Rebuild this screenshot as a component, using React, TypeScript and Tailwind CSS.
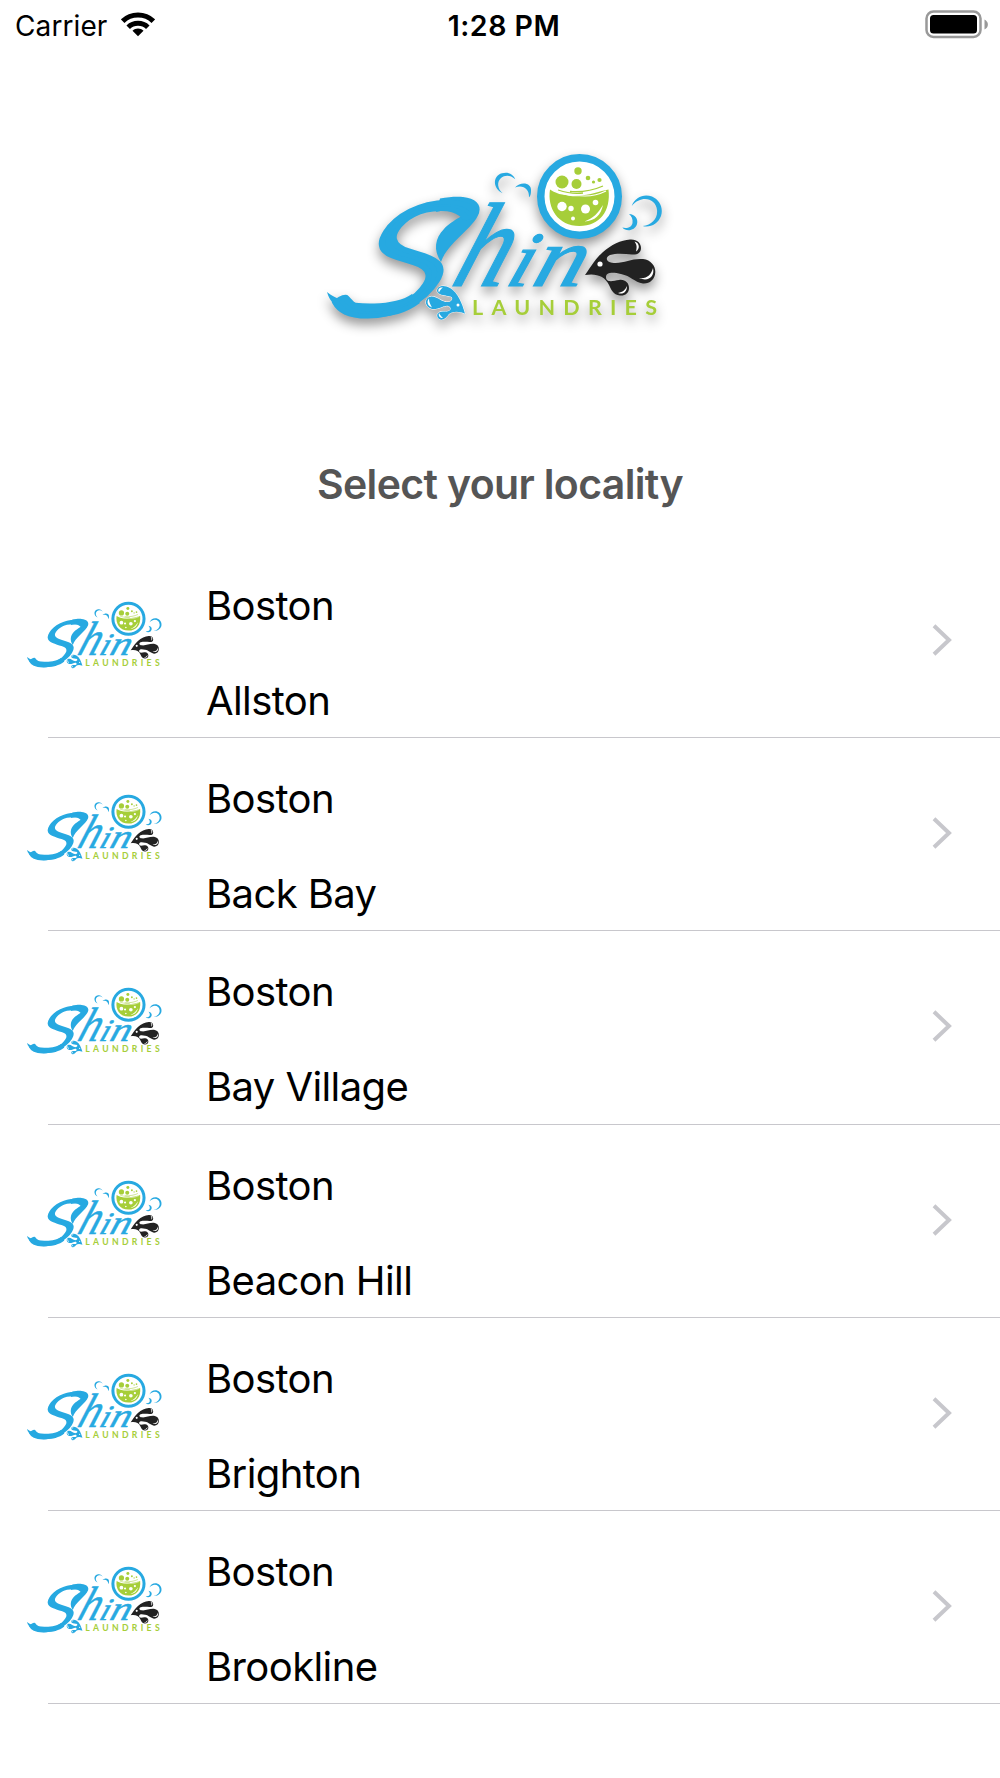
const LOCALITIES = [
  { city: 'Boston', area: 'Allston' },
  { city: 'Boston', area: 'Back Bay' },
  { city: 'Boston', area: 'Bay Village' },
  { city: 'Boston', area: 'Beacon Hill' },
  { city: 'Boston', area: 'Brighton' },
  { city: 'Boston', area: 'Brookline' },
];

function Logo({ className }: { className: string }) {
  return (
    <svg viewBox="320 140 350 200" className={`overflow-visible ${className}`} role="img" aria-label="Shine Laundries">
      {/* Flourishes and lettering */}
      <g fill="#27a9e1">
        <path d="M327 292 C337 300 350 304 374 303.500 C390 303 404 300 412 294 L420 303 C406 314 388 317.500 372 317 C360 317.500 350 314 343 310 C334 305 329 300 327 292Z" />
        <path d="M440 198.500 C450 196.500 458 196.500 463 197 C475 198.500 482 204 479 213 C474 228 447 243 441 262 C433 250 435 238 444 229 C452 220 468 214 468 210 C466 206 458 208 436 212Z" />
      </g>
      <g fill="#27a9e1" stroke="#27a9e1">
        <text
          transform="translate(318 315) skewX(-32) scale(1.29 1)"
          fontSize="158"
          strokeWidth="4.500"
          className="font-['Lato'] font-light"
        >
          S
        </text>
        <g className="font-['Liberation_Serif'] italic" strokeWidth="1.200">
          <text transform="translate(449 286) skewX(-20) scale(0.88 1)" fontSize="120">
            h
          </text>
          <text transform="translate(504 286) skewX(-20) scale(1.1 1)" fontSize="78">
            i
          </text>
          <text transform="translate(530 286) skewX(-18) scale(1.2 1)" fontSize="84">
            n
          </text>
        </g>
      </g>
      <text
        x="472"
        y="315"
        fill="#a6ce39"
        fontSize="21.500"
        textLength="185"
        className="font-['Lato'] font-bold"
      >
        LAUNDRIES
      </text>

      {/* Washer door */}
      <circle cx="579.5" cy="196.500" r="38.750" fill="#fff" stroke="#27a9e1" strokeWidth="7.500" />
      <path
        fill="#a6ce39"
        d="M550 189.500 C560 196 568 195.500 578 195.500 C590 195.500 600 191 608.500 189.500 C611 211 600 226 579.500 226 C558 226 547 208 550 189.500Z"
      />
      <path
        fill="none"
        stroke="#a6ce39"
        strokeWidth="1.300"
        d="M558 190 C570 194 576 194 583 193 M570 191.500 C584 192.500 594 190 603 186"
      />
      <path fill="none" stroke="#fff" strokeWidth="1.200" d="M555 190 C570 198 577 195 585 196 C593 196 600 194 606 191" />
      <path fill="#fff" d="M584.500 221.500 C594 218 598 213 603 205 C601 215 595 221 584.500 221.500Z" />
      <g fill="#a6ce39">
        <circle cx="562" cy="182" r="6.500" />
        <circle cx="576.500" cy="184" r="5" />
        <circle cx="578" cy="171" r="3.700" />
        <circle cx="588" cy="178" r="2.300" />
        <circle cx="593.500" cy="182" r="1.600" />
        <circle cx="599.500" cy="180" r="2.100" />
      </g>
      <g fill="#fff">
        <circle cx="562" cy="206.500" r="4.700" />
        <circle cx="571" cy="208.500" r="2.700" />
        <circle cx="585.500" cy="209" r="4.500" />
        <circle cx="595.500" cy="202.500" r="2.800" />
        <circle cx="573" cy="218.500" r="2" />
      </g>

      {/* Soap bubbles */}
      <g fill="#27a9e1">
        <path d="M502.700 193.300 C493 189 492 176 502 173.300 C508 171.500 513 174 515.300 179.300 C510 174.500 505 175 501 178 C496.500 182 497.500 189 502.700 193.300Z" />
        <path d="M515 187.500 C521 181 532 183 531 191 C531 194 530.500 196 529 197.300 C529.500 189 523 184.500 515 187.500Z" />
        <path d="M631.700 206 C635 197 644 193.500 652 196.500 C660 200 663.500 208 661 216 C658 224 650 228 642.700 226 C652 225 658 218 657 210 C656 199 642 194 631.700 206Z" />
        <path d="M629 214 C635 214.500 638.500 219 637 224 C635 231 626 232 622.300 227.500 C627 229 632 227 632.500 223 C633 219 631.500 216 629 214Z" />
      </g>

      {/* Dark splash */}
      <path
        fill="#222"
        d="M585 275 C592 265 596 258 603 252 C611 245 621 240 630 239.500 C637 239 641 243 641 248 C641 253 637 255 632 254.500 C625 254 617 253 610 255 C605 257 606 262 612 262.700 C624 264 631 258 643 259 C651 260 655.500 266 655.300 272 C655 280 649 284 643 283.500 C634 282 631 276 621 274 C613 272 606 272 606 277 C606 283 613 281 619 280 C625 279 629 283 629 288 C629 293 625 296 620 295.500 C613 295 611 289 609 285 C605 276 596 273 585 275Z"
      />
      <g fill="#fff">
        <circle cx="600" cy="264" r="2.600" />
        <path d="M634.500 241.500 C640 243 640 249 636 251.500 C637 247 637 245 634.500 241.500Z" />
        <path d="M653 268 C655 277 648 282 639 278 C647 279 651 275 653 268Z" />
        <path d="M627 286 C627 292 623 295 618 293 C623 292 625 290 627 286Z" />
      </g>

      {/* Blue splash */}
      <path
        fill="#27a9e1"
        stroke="#fff"
        strokeWidth="1"
        paintOrder="stroke"
        d="M465 313.700 C459 311 453 311 449 314 C446 318 443 321 439 319 C435 315 438 311 444 311.500 C449 312 452 310 450 307 C446 303 440 310 432 309 C425 307 424 300 429 297 C436 294 441 303 449 302 C454 300 453 296 448 296 C444 295 438 295 437 291 C437 285 445 285 450 288 C458 293 462 303 465 313.700Z"
      />
      <g fill="#fff">
        <circle cx="458" cy="305" r="1.500" />
        <path d="M429 298.500 C426 302 428 306 432 307.500 C430 304 429 302 429 298.500Z" />
        <path d="M439 292.500 C437 289 440 287 443 287.500 C441 289 440 290 439 292.500Z" />
        <path d="M439 313 C438 316 440 318 443 318 C441 316 440 315 439 313Z" />
      </g>
    </svg>
  );
}

function StatusBar() {
  return (
    <header className="grid h-[50px] grid-cols-3 items-center text-[28px] leading-none text-black">
      <div className="flex items-center gap-3.5 pl-[15px] pt-px">
        <span className="tracking-[0.1px]">Carrier</span>
        <svg viewBox="0 0 34 25" className="mb-[3px] h-[25px] w-[34px]">
          <g fill="none" stroke="#000" strokeWidth="5">
            <path d="M1.700 9.200 C10 1 24 1 32.300 9.200" />
            <path d="M7.200 15.200 C12.500 10 21.500 10 26.800 15.200" />
          </g>
          <path d="M11.500 18.700 C14.500 15.800 19.500 15.800 22.500 18.700 L17 24.300Z" />
        </svg>
      </div>
      <div className="pl-2 pt-0.5 text-center text-[28.5px] font-semibold tracking-[0.5px]">1:28 PM</div>
      <svg viewBox="0 0 64 30" className="mb-0.5 mr-[11px] h-[30px] w-16 justify-self-end">
        <rect x="1.500" y="2.500" width="54" height="25.500" rx="7" fill="none" stroke="#999" strokeWidth="2.500" />
        <rect x="5" y="6" width="47" height="18.500" rx="3.500" />
        <path d="M59.500 10.500 C64 12.500 64 18.500 59.500 20.500Z" fill="#999" />
      </svg>
    </header>
  );
}

function LocalityRow({ city, area }: { city: string; area: string }) {
  return (
    <li className="h-[193.2px]">
      <button className="flex h-full w-full items-start text-left">
        <Logo className="ml-[24px] mt-[50.5px] h-[80.4px] w-[141px] shrink-0" />
        <span className="ml-[41px] mt-[37px] flex flex-1 flex-col gap-[47px] text-[40px] leading-[48px] tracking-[-0.6px] text-black">
          <span>{city}</span>
          <span>{area}</span>
        </span>
        <svg viewBox="0 0 20 32" className="mr-[48px] mt-[79px] h-8 w-5">
          <path d="M2 1.800 L17 16 L2 30.200" fill="none" stroke="#c7c7cc" strokeWidth="4" />
        </svg>
      </button>
      <div className="-mt-px ml-12 h-px bg-[#c8c7cc]" />
    </li>
  );
}

export default function App() {
  return (
    <div className="h-[1778px] overflow-hidden bg-white font-['Inter',sans-serif]">
      <StatusBar />
      <div className="flex justify-center pt-[90px]">
        <Logo className="mr-2.5 h-[200px] w-[350px] drop-shadow-[0_6px_6px_rgba(0,0,0,0.42)]" />
      </div>
      <h1 className="mt-[120px] text-center text-[41px] font-semibold leading-[48px] tracking-[-0.65px] text-[#555]">
        Select your locality
      </h1>
      <ul className="mt-[37px]">
        {LOCALITIES.map((item) => (
          <LocalityRow key={item.area} city={item.city} area={item.area} />
        ))}
      </ul>
    </div>
  );
}
